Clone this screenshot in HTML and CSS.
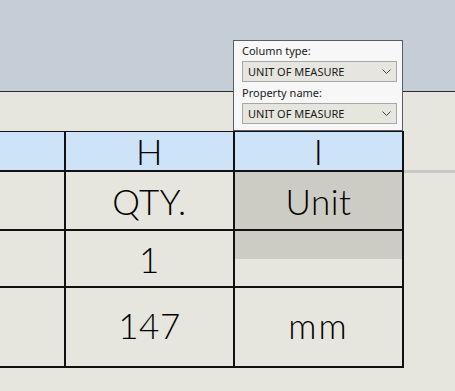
FILE: index.html
```html
<!DOCTYPE html>
<html>
<head>
	<title>Table properties</title>
	<link rel="stylesheet" href="styles.css">
</head>
<body>
	<div class="topband"></div>

	<div class="sheet">
		<div class="grid">
			<div class="cell head"></div>
			<div class="cell head">H</div>
			<div class="cell head">I</div>

			<div class="cell"></div>
			<div class="cell">QTY.</div>
			<div class="cell picked">Unit</div>

			<div class="cell"></div>
			<div class="cell">1</div>
			<div class="cell top"><div class="partial"></div></div>

			<div class="cell"></div>
			<div class="cell last">147</div>
			<div class="cell last wide">mm</div>
		</div>
		<div class="filler"><div class="shade"></div></div>
	</div>

	<div class="popup">
		<div class="label">Column type:</div>
		<div class="combo">
			<span>UNIT OF MEASURE</span>
			<svg width="9" height="5" viewBox="0 0 9 5"><path d="M0.5 0.5 L4.5 4.5 L8.5 0.5" fill="none" stroke="#444" stroke-width="1"/></svg>
		</div>
		<div class="label second">Property name:</div>
		<div class="combo">
			<span>UNIT OF MEASURE</span>
			<svg width="9" height="5" viewBox="0 0 9 5"><path d="M0.5 0.5 L4.5 4.5 L8.5 0.5" fill="none" stroke="#444" stroke-width="1"/></svg>
		</div>
	</div>
</body>
</html>
```

FILE: styles.css
```css
body
{
	margin: 0;
	background-color: #e6e5de;
	font-family: Lato, "Liberation Sans", sans-serif;
	color: #000;
}

.topband
{
	height: 91px;
	background-color: #c5cdd7;
	border-bottom: 1px solid #2a2a2a;
}

.sheet
{
	display: flex;
	margin-top: 39px;
}

.grid
{
	display: grid;
	grid-template-columns: 64px 167px 167px;
	grid-template-rows: 38px 57px 55px 78px;
	gap: 2px;
	padding: 1px 2px 2px 0;
	background-color: #111;
}

.cell
{
	background-color: #e6e5de;
	display: flex;
	align-items: center;
	justify-content: center;
	font-size: 35px;
	font-weight: 300;
	letter-spacing: 0.5px;
}

.head
{
	background-color: #cde3f7;
}

.picked
{
	background-color: #cdccc4;
}

.top
{
	align-items: flex-start;
}

.last
{
	padding-bottom: 5px;
}

.wide
{
	letter-spacing: 2px;
}

.partial
{
	width: 100%;
	height: 28px;
	background-color: #cdccc4;
}

.filler
{
	flex: 1;
	padding-top: 39px;
}

.shade
{
	height: 3px;
	background-color: #c8c8c8;
}

.popup
{
	position: absolute;
	left: 233px;
	top: 40px;
	width: 160px;
	height: 87px;
	padding: 2px 0 0 8px;
	background-color: #f7f7f7;
	border: 1px solid #5a5d66;
	font-family: "Noto Sans", "Open Sans", sans-serif;
	font-size: 11px;
	color: #1a1a1a;
}

.label
{
	line-height: 16px;
}

.second
{
	margin-top: 3px;
}

.combo
{
	display: flex;
	align-items: center;
	justify-content: space-between;
	width: 143px;
	height: 19px;
	margin-top: 2px;
	padding: 0 5px 0 5px;
	background-color: #e6e5de;
	border: 1px solid #a8a8a8;
}

.combo span
{
	line-height: 19px;
}
```
